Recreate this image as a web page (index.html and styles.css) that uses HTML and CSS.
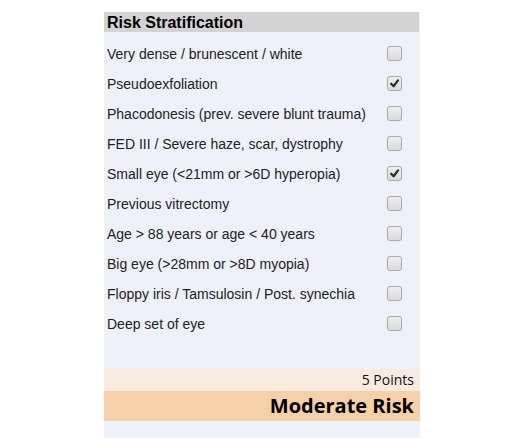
FILE: index.html
```html
<!DOCTYPE html>
<html lang="en">
  <head>
    <meta charset="UTF-8" />
    <title>Risk Stratification</title>
    <link rel="stylesheet" href="styles.css">
  </head>
  <body>
    <div class="panel">
      <div class="panel-title">Risk Stratification</div>

      <ul class="risk-list">
        <li><span>Very dense / brunescent / white</span><span class="box"></span></li>
        <li><span>Pseudoexfoliation</span><span class="box checked"><svg viewBox="0 0 13 13"><path d="M3.2 6.8 L5.6 9.2 L10 3.4" /></svg></span></li>
        <li><span>Phacodonesis (prev. severe blunt trauma)</span><span class="box"></span></li>
        <li><span>FED III / Severe haze, scar, dystrophy</span><span class="box"></span></li>
        <li><span>Small eye (&lt;21mm or &gt;6D hyperopia)</span><span class="box checked"><svg viewBox="0 0 13 13"><path d="M3.2 6.8 L5.6 9.2 L10 3.4" /></svg></span></li>
        <li><span>Previous vitrectomy</span><span class="box"></span></li>
        <li><span>Age &gt; 88 years or age &lt; 40 years</span><span class="box"></span></li>
        <li><span>Big eye (&gt;28mm or &gt;8D myopia)</span><span class="box"></span></li>
        <li><span>Floppy iris / Tamsulosin / Post. synechia</span><span class="box"></span></li>
        <li><span>Deep set of eye</span><span class="box"></span></li>
      </ul>

      <div class="points">5 Points</div>
      <div class="risk-level">Moderate Risk</div>
    </div>
  </body>
</html>
```

FILE: styles.css
```css
body {
  margin: 0;
  background: #fff;
  font-family: "Liberation Sans", Arial, sans-serif;
}
.panel {
  width: 316px;
  margin: 12px 0 0 104px;
  min-height: 426px;
  background-color: #eef1fa;
}
.panel-title {
  height: 20px;
  line-height: 21px;
  margin-right: 1px;
  padding-left: 3px;
  background-color: #d3d3d3;
  font-size: 16px;
  font-weight: bold;
  color: #000;
}
.risk-list {
  list-style: none;
  margin: 7px 0 0;
  padding: 0;
}
.risk-list li {
  display: flex;
  align-items: center;
  justify-content: space-between;
  height: 30px;
  padding: 0 18px 0 3px;
  font-size: 14px;
  color: #222;
}
.box {
  position: relative;
  top: -1px;
  width: 15px;
  height: 15px;
  box-sizing: border-box;
  border: 1px solid #ababab;
  border-radius: 3px;
  background: linear-gradient(#efefef, #dadada);
  box-shadow: 0 0 1px rgba(0, 0, 0, 0.12);
}
.box svg {
  display: block;
  width: 13px;
  height: 13px;
}
.box path {
  fill: none;
  stroke: #2b2b2b;
  stroke-width: 2.3;
  stroke-linecap: round;
  stroke-linejoin: round;
}
.points {
  margin-top: 30px;
  height: 22px;
  line-height: 22px;
  padding-right: 6px;
  background-color: #f9ebdf;
  text-align: right;
  font-family: "Open Sans", "Noto Sans", sans-serif;
  font-size: 14px;
  color: #111;
}
.risk-level {
  height: 30px;
  line-height: 30px;
  padding-right: 6px;
  background-color: #f6d0a8;
  text-align: right;
  font-family: "Open Sans", "Noto Sans", sans-serif;
  font-size: 20px;
  font-weight: bold;
  color: #000;
}
```
